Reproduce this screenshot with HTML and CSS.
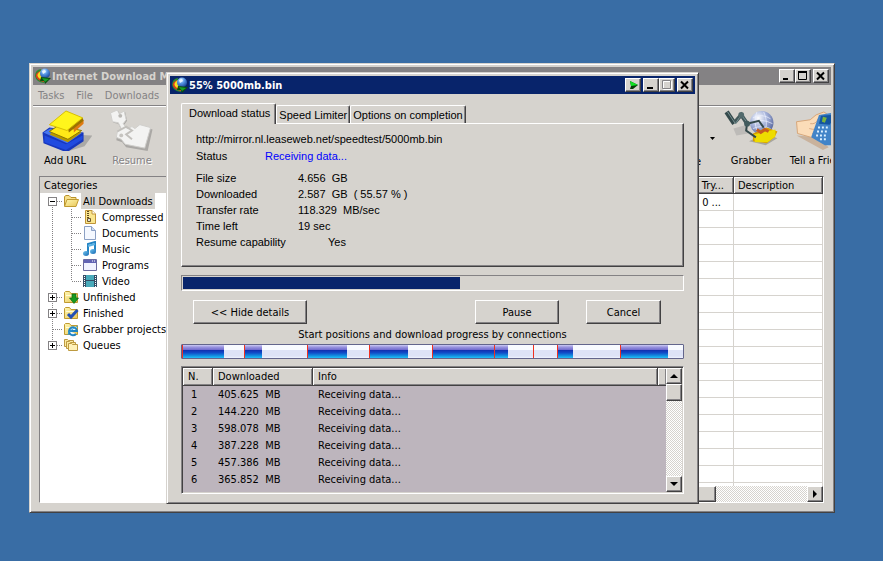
FILE: index.html
```html
<!DOCTYPE html>
<html lang="en">
<head>
<meta charset="utf-8">
<title>Internet Download Manager</title>
<link rel="stylesheet" href="styles.css">
</head>
<body>
<svg class="defs" aria-hidden="true">
  <defs>
    <linearGradient id="yellow" x1="0" y1="0" x2="1" y2="1"><stop offset="0" stop-color="#fff7b0"/><stop offset="1" stop-color="#e8c65a"/></linearGradient>
    <linearGradient id="sky" x1="0" y1="0" x2="1" y2="1"><stop offset="0" stop-color="#6fc4f0"/><stop offset="1" stop-color="#1668b0"/></linearGradient>
    <radialGradient id="ball" cx=".35" cy=".3" r=".8"><stop offset="0" stop-color="#fff"/><stop offset=".45" stop-color="#a9b6dc"/><stop offset="1" stop-color="#4d5b94"/></radialGradient>
    <radialGradient id="globe" cx=".4" cy=".25" r=".8"><stop offset="0" stop-color="#d8ecff"/><stop offset=".4" stop-color="#5a9be8"/><stop offset="1" stop-color="#123a90"/></radialGradient>
    <symbol id="logo" viewBox="0 0 16 16">
      <path d="M6 1Q0 2 0 8Q1 14 9 15L9 10Q4 9 6 1Z" fill="#2a8c30"/>
      <path d="M5 3Q0 5 1 9Q3 13 9 14L9 10Q4 9 5 3Z" fill="#e03c1c"/>
      <path d="M6 3Q1 6 3 9Q5 12 9 12L9 9Q5 8 6 3Z" fill="#f8e020"/>
      <circle cx="10" cy="5.500" r="5" fill="url(#globe)"/>
      <path d="M7 3 10 2 11 4 8 6Z" fill="#e8f4ff"/>
      <path d="M6 9 16 10 10 16 9 13 5 13Z" fill="#0c5010"/>
      <path d="M7 10 14 11 10 14Z" fill="#18a028"/>
    </symbol>
    <symbol id="folder" viewBox="0 0 16 16">
      <path d="M1.500 13.500V3.500L2.500 2.500H6.500L8 4.500H14.500V13.500Z" fill="url(#yellow)" stroke="#c09a30"/>
      <path d="M3 6.500h11" stroke="#fffbd8"/>
    </symbol>
  </defs>
</svg>

<main class="desktop">
  <section class="window main-window" aria-label="Internet Download Manager">
    <header class="titlebar inactive">
      <svg class="logo"><use href="#logo"/></svg>
      <h1>Internet Download Manager</h1>
      <div class="controls">
        <button type="button" aria-label="Minimize"><svg viewBox="0 0 12 10"><path d="M2 8h5" stroke="#000" stroke-width="2"/></svg></button>
        <button type="button" aria-label="Maximize"><svg viewBox="0 0 12 10"><path d="M1.500 1v7.500h8V1M1 1h9" fill="none" stroke="#000"/><path d="M1 1h9" stroke="#000" stroke-width="2"/></svg></button>
        <button type="button" class="close" aria-label="Close"><svg viewBox="0 0 12 10"><path d="M2 1.500 9 8.500M9 1.500 2 8.500" stroke="#000" stroke-width="2"/></svg></button>
      </div>
    </header>
    <nav class="menubar"><button type="button">Tasks</button><button type="button">File</button><button type="button">Downloads</button></nav>
    <div class="toolbar">
      <button type="button" class="tool">
        <svg viewBox="-3 0 54 44">
          <path d="M30 25 52 26 44 37 28 42Z" fill="#aaa9a6"/>
          <path d="M1 23 8 18 43 23 43 32 28 42 22 42 2 34Z" fill="#1737bd"/>
          <path d="M2 23 9 19 42 23 26 34Z" fill="#4776f0"/>
          <path d="M3 26 25 35 42 26 42 30 25 41 3 33Z" fill="#204be0"/>
          <path d="M8 25 17 18 41 23 27 33Z" fill="#b89800"/>
          <path d="M8 22 17 16 41 21 27 30Z" fill="#ffe817" stroke="#8c7600"/>
          <path d="M33 18 43 10 43 14 33 23Z" fill="#e07a12"/>
          <path d="M27 19 42 8 43 11 28 23Z" fill="#9c7200"/>
          <path d="M8 15 25 1 42 8 26 21Z" fill="#fff51c" stroke="#d6bd00"/>
        </svg>
        <span>Add URL</span>
      </button>
      <button type="button" class="tool" disabled>
        <svg viewBox="-3 0 54 44">
          <path d="M3 4 10 1 12 5 17 2 19 11 16 15 20 20 25 18 28 20 33 16 45 20 40 42 18 38 14 33 8 31 9 23 13 20 10 14 5 13Z" fill="#aaa8a5"/>
          <path d="M2 3 9 0 11 4 16 1 18 10 15 14 19 19 24 17 27 19 32 15 43 18 37 39 17 35 13 30 8 28 9 22 13 19 10 13 4 12Z" fill="#f3f3f2" stroke="#d0cfcc"/>
          <path d="M9 22 18 17 24 21 18 25 24 30" fill="none" stroke="#c2c0bc" stroke-width="2"/>
          <circle cx="12" cy="6" r="2" fill="#b9b7b3"/><circle cx="13" cy="26" r="2" fill="#c6c4c0"/>
        </svg>
        <span>Resume</span>
      </button>
      <div class="toolbar-end">
        <button type="button" class="tool queue"><span>Queue</span></button>
        <button type="button" class="drop" aria-label="Queue options"><svg viewBox="0 0 5 3"><path d="M0 0h5L2.500 3Z"/></svg></button>
        <button type="button" class="tool">
          <svg viewBox="0 0 54 44">
            <path d="M9 19 23 15 24 24 12 26Z" fill="#bdbbb8"/><path d="M25 32 42 24 54 29 42 36Z" fill="#a8a69f"/>
            <circle cx="38" cy="13" r="12" fill="url(#ball)"/>
            <path d="M29 8q9-5 18 1M27 13q11-5 22 1M29 19q9-4 18 0M33 2q-4 11 1 21M40 2q5 10 1 22" fill="none" stroke="#eef2ff" stroke-width=".7"/>
            <path d="M29 24 43 18 54 22 51 28 43 34 29 32Z" fill="#d79b00"/><path d="M30 25 42 22 52 20 52 27 44 33 31 33Z" fill="#eedc00"/>
            <path d="M33 20l4 3 4-3 4 2" fill="none" stroke="#c65c20" stroke-width="3"/>
            <path d="M2 2 10 14" stroke="#34494b" stroke-width="5"/><path d="M10 13 17 5 23 14" fill="none" stroke="#42585a" stroke-width="4"/>
            <path d="M23 14 35 11 40 18M23 14 22 21 32 28" fill="none" stroke="#34494b" stroke-width="2"/>
            <path d="M3 2 11 14 17 5 24 14" fill="none" stroke="#789092" stroke-width="1"/>
            <circle cx="17" cy="5" r="3" fill="#526a6c"/><circle cx="23" cy="14" r="3" fill="#425b5d"/>
          </svg>
          <span>Grabber</span>
        </button>
        <button type="button" class="tool tell">
          <svg viewBox="-3 0 54 44">
            <path d="M1 26 22 28 34 38 28 41Z" fill="#c9b29c"/>
            <path d="M1 12 15 10 21 5 29 2 32 4 27 12 29 18 25 28 16 28 2 24Z" fill="#fbdcb8" stroke="#d6a578"/>
            <path d="M15 14q6 1 8-5M14 19q7 2 10-1M17 24l6-1" fill="none" stroke="#d8a982"/>
            <path d="M24 5 36 3 42 8 37 36 30 36 16 28Z" fill="#4284c8"/><path d="M26 6 36 5 39 8 35 15 24 14Z" fill="#1455a0"/><path d="M28 7l4 1-2 5-3-1Z" fill="#7bb43e"/>
            <g stroke="#ddf1ff" stroke-width="2"><path d="M23 18h2m2 0h2m2 0h2M22 22h2m2 0h2m2 0h2M21 26h2m2 0h2m2 0h2M25 30h2m2 0h2"/></g>
          </svg>
          <span>Tell a Friend</span>
        </button>
      </div>
    </div>
    <div class="workspace">
      <aside class="categories">
        <h2>Categories</h2>
        <ul class="tree">
          <li><a href="#" class="selected"><i class="toggle open"></i>
            <svg viewBox="0 0 16 16"><path d="M1.500 13V3.500L3 2.500H6L8 4.500H13V7" fill="#f7df88" stroke="#b8922c"/><path d="M1.500 13.500 4 6.500H15.500L13 13.500Z" fill="url(#yellow)" stroke="#c09a30"/></svg><span>All Downloads</span></a>
            <ul>
              <li><a href="#"><svg viewBox="0 0 16 16"><path d="M3.500 1.500H10L13.500 5V14.500H3.500Z" fill="#fae68e" stroke="#c09438"/><path d="M10 1.500V5h3.500" fill="#fff" stroke="#c09438"/><path d="M6 2v10" stroke="#604820" stroke-width="2" stroke-dasharray="1 1"/><path d="M5.500 9.500h3v3h-3Z" fill="#ddd" stroke="#705828"/></svg><span>Compressed</span></a></li>
              <li><a href="#"><svg viewBox="0 0 16 16"><path d="M2.500 1.500H9.500L13.500 5.500V14.500H2.500Z" fill="#f4f8ff" stroke="#8ba0c4"/><path d="M9.500 1.500V5.500h4" fill="#cddbf2" stroke="#8ba0c4"/></svg><span>Documents</span></a></li>
              <li><a href="#"><svg viewBox="0 0 16 16"><path d="M6 12V3L13 1V10" fill="none" stroke="#2484c4" stroke-width="2"/><path d="M6 5 13 3" stroke="#59b2e4" stroke-width="2"/><ellipse cx="4" cy="12.500" rx="3" ry="2.500" fill="url(#sky)"/><ellipse cx="11" cy="10.500" rx="3" ry="2.500" fill="url(#sky)"/></svg><span>Music</span></a></li>
              <li><a href="#"><svg viewBox="0 0 16 16"><path d="M1.500 2.500h13v11h-13Z" fill="#f0f2ff" stroke="#6c6ca0"/><path d="M2 3h12v3H2Z" fill="#6264b4"/><path d="M10 4h1m1 0h1" stroke="#fff"/></svg><span>Programs</span></a></li>
              <li><a href="#"><svg viewBox="0 0 16 16"><path d="M1 2h14v12H1Z" fill="#354e66"/><path d="M4 2h8v5H4zM4 8h8v6H4z" fill="#48aaba"/><path d="M2.500 3v11M13.500 3v11" stroke="#fff" stroke-dasharray="1 1"/></svg><span>Video</span></a></li>
            </ul>
          </li>
          <li><a href="#"><i class="toggle"></i><svg viewBox="0 0 16 16"><use href="#folder"/><path d="M9 5h4v4h2.500L11 14.500 6.500 9H9Z" fill="#169a20" stroke="#0b6814" stroke-width=".7"/></svg><span>Unfinished</span></a></li>
          <li><a href="#"><i class="toggle"></i><svg viewBox="0 0 16 16"><use href="#folder"/><path d="M5 9 8 12 14.500 5" fill="none" stroke="#2450b4" stroke-width="3"/></svg><span>Finished</span></a></li>
          <li><a href="#"><svg viewBox="0 0 16 16"><use href="#folder"/><path d="M6.500 10H14a4 4 0 1 0-1 3" fill="#e9f7ff" stroke="#2184c4" stroke-width="2"/><path d="M5 14q0-4 10-9" fill="none" stroke="#2f9ad5"/></svg><span>Grabber projects</span></a></li>
          <li><a href="#"><i class="toggle"></i><svg viewBox="0 0 16 16"><path d="M1.500 9.500V2.500h3l1 1h5v6Z" fill="#fbeaa0" stroke="#bd9a40"/><path d="M3.500 11.500V4.500h3l1 1h5v6Z" fill="#fbeaa0" stroke="#bd9a40"/><path d="M5.500 13.500V6.500h3l1 1h5v6Z" fill="#fff2b8" stroke="#bd9a40"/></svg><span>Queues</span></a></li>
        </ul>
      </aside>
      <div class="downloads">
        <div class="downloads-view">
          <table>
            <thead><tr><th></th><th class="try">Last Try...</th><th class="desc">Description</th></tr></thead>
            <tbody>
              <tr><td></td><td class="try">0 ...</td><td></td></tr>
              <tr><td></td><td></td><td></td></tr><tr><td></td><td></td><td></td></tr><tr><td></td><td></td><td></td></tr><tr><td></td><td></td><td></td></tr>
              <tr><td></td><td></td><td></td></tr><tr><td></td><td></td><td></td></tr><tr><td></td><td></td><td></td></tr><tr><td></td><td></td><td></td></tr>
              <tr><td></td><td></td><td></td></tr><tr><td></td><td></td><td></td></tr><tr><td></td><td></td><td></td></tr><tr><td></td><td></td><td></td></tr>
              <tr><td></td><td></td><td></td></tr><tr><td></td><td></td><td></td></tr><tr><td></td><td></td><td></td></tr><tr><td></td><td></td><td></td></tr><tr><td></td><td></td><td></td></tr>
            </tbody>
          </table>
        </div>
        <div class="scroll horizontal"><span class="thumb"></span><button type="button" aria-label="Scroll right"><svg viewBox="0 0 8 8"><path d="M2 0v8l4-4Z"/></svg></button></div>
      </div>
    </div>
  </section>

  <section class="window dialog" role="dialog" aria-label="55% 5000mb.bin">
    <header class="titlebar">
      <svg class="logo"><use href="#logo"/></svg>
      <h1>55% 5000mb.bin</h1>
      <div class="controls">
        <button type="button" class="tray" aria-label="Send to tray"><svg viewBox="0 0 12 10"><path d="M3 1 11 5 6 9 3 9 4 6Z" fill="#063b08"/><path d="M3 1 11 5 4 6Z" fill="#10e424"/></svg></button>
        <button type="button" aria-label="Minimize"><svg viewBox="0 0 12 10"><path d="M2 8h6" stroke="#000" stroke-width="2"/></svg></button>
        <button type="button" aria-label="Maximize" disabled><svg viewBox="0 0 12 10"><path d="M2.500 1.500h8v8h-8Z" fill="none" stroke="#fff"/><path d="M1.500 .5h8v8h-8Z" fill="none" stroke="#848284"/></svg></button>
        <button type="button" class="close" aria-label="Close"><svg viewBox="0 0 12 10"><path d="M2 1.500 9 8.500M9 1.500 2 8.500" stroke="#000" stroke-width="2"/></svg></button>
      </div>
    </header>
    <div class="dialog-body">
      <div class="tabs" role="tablist">
        <button type="button" role="tab" class="tab active" aria-selected="true">Download status</button>
        <button type="button" role="tab" class="tab">Speed Limiter</button>
        <button type="button" role="tab" class="tab">Options on completion</button>
      </div>
      <div class="panel" role="tabpanel">
        <p>http://mirror.nl.leaseweb.net/speedtest/5000mb.bin</p>
        <dl class="status"><dt>Status</dt><dd>Receiving data...</dd></dl>
        <dl class="facts">
          <dt>File size</dt><dd>4.656&nbsp; GB</dd>
          <dt>Downloaded</dt><dd>2.587&nbsp; GB&nbsp; ( 55.57 % )</dd>
          <dt>Transfer rate</dt><dd>118.329&nbsp; MB/sec</dd>
          <dt>Time left</dt><dd>19 sec</dd>
          <dt>Resume capability</dt><dd class="resume">Yes</dd>
        </dl>
      </div>
      <div class="progress" role="progressbar" aria-label="Download progress" aria-valuenow="55"><div class="fill" style="width: 55.57%"></div></div>
      <div class="actions">
        <button type="button" class="button details">&lt;&lt; Hide details</button>
        <button type="button" class="button pause">Pause</button>
        <button type="button" class="button cancel">Cancel</button>
      </div>
      <p class="caption">Start positions and download progress by connections</p>
      <div class="segments">
        <span class="done start" style="flex-grow: 42"></span><span style="flex-grow: 20"></span>
        <span class="done start" style="flex-grow: 17"></span><span style="flex-grow: 46"></span>
        <span class="done start" style="flex-grow: 40"></span><span style="flex-grow: 22"></span>
        <span class="done start" style="flex-grow: 39"></span><span style="flex-grow: 24"></span>
        <span class="done start" style="flex-grow: 63"></span><span class="done start" style="flex-grow: 13"></span><span style="flex-grow: 25"></span>
        <span class="start" style="flex-grow: 24"></span>
        <span class="done start" style="flex-grow: 15"></span><span style="flex-grow: 48"></span>
        <span class="done start" style="flex-grow: 48"></span><span style="flex-grow: 15"></span>
      </div>
      <div class="connections">
        <div class="connections-view">
          <table>
            <thead><tr><th class="num">N.</th><th class="amount">Downloaded</th><th>Info</th><th class="rest"></th></tr></thead>
            <tbody>
              <tr><td>1</td><td>405.625&nbsp; MB</td><td>Receiving data...</td><td></td></tr>
              <tr><td>2</td><td>144.220&nbsp; MB</td><td>Receiving data...</td><td></td></tr>
              <tr><td>3</td><td>598.078&nbsp; MB</td><td>Receiving data...</td><td></td></tr>
              <tr><td>4</td><td>387.228&nbsp; MB</td><td>Receiving data...</td><td></td></tr>
              <tr><td>5</td><td>457.386&nbsp; MB</td><td>Receiving data...</td><td></td></tr>
              <tr><td>6</td><td>365.852&nbsp; MB</td><td>Receiving data...</td><td></td></tr>
            </tbody>
          </table>
        </div>
        <div class="scroll vertical">
          <button type="button" aria-label="Scroll up"><svg viewBox="0 0 8 8"><path d="M0 6h8L4 2Z"/></svg></button>
          <span class="thumb"></span>
          <button type="button" class="down" aria-label="Scroll down"><svg viewBox="0 0 8 8"><path d="M0 2h8L4 6Z"/></svg></button>
        </div>
      </div>
    </div>
  </section>
</main>
</body>
</html>
```
FILE: styles.css
```css
:root {
  --face: #d6d3ce;
  --shade: #848284;
  --dark: #424142;
  --navy: #08246b;
}

* { box-sizing: border-box; }

body, h1, h2, p, ul, dl, dd { margin: 0; padding: 0; }

body, button {
  font-family: "DejaVu Sans Condensed", Tahoma, "Noto Sans", sans-serif;
  font-size: 11px;
  line-height: 16px;
  color: #000;
}

body { background: #396da5; }
.defs { position: absolute; width: 0; height: 0; }
.desktop { position: relative; min-height: 100vh; overflow: hidden; }
svg { display: block; flex: none; }
ul { list-style: none; }
table { width: 100%; border-collapse: separate; border-spacing: 0; table-layout: fixed; }
th, td { padding: 0; text-align: left; font-weight: normal; white-space: nowrap; overflow: hidden; }
td { vertical-align: bottom; }

button { margin: 0; padding: 0; border: 0; background: var(--face); white-space: nowrap; }

.window {
  position: absolute;
  padding: 3px;
  border: 1px solid;
  border-color: var(--face) var(--dark) var(--dark) var(--face);
  background: var(--face);
  box-shadow: inset 1px 1px #fff, inset -1px -1px var(--shade);
}
.main-window { left: 29px; right: 48px; top: 63px; }
.dialog { left: 166px; right: 184px; top: 72px; }

.titlebar {
  display: flex;
  align-items: center;
  height: 18px;
  padding: 0 2px;
  background: var(--navy);
  color: #fff;
}
.titlebar h1 {
  flex: 1;
  padding: 1px 0 0 1px;
  font-size: 11px;
  font-weight: bold;
  white-space: nowrap;
}
.titlebar.inactive { background: var(--shade); color: var(--face); }
.logo { width: 16px; height: 16px; }

.controls { display: flex; }
.controls button, .scroll button, .thumb, .button {
  border: 1px solid;
  border-color: #fff var(--dark) var(--dark) #fff;
  box-shadow: inset -1px -1px var(--shade);
  background: var(--face);
}
.controls button { width: 16px; height: 14px; padding: 1px; }
.controls svg { width: 12px; height: 10px; }
.controls .close, .controls .tray + button { margin-left: 2px; }

.menubar { display: flex; gap: 12px; height: 21px; padding: 3px 5px 1px; border-bottom: 1px solid var(--shade); box-shadow: 0 1px #fff; }
.menubar button { color: var(--shade); }

.toolbar { display: flex; height: 70px; padding-top: 4px; }
.tool { display: flex; flex-direction: column; align-items: center; width: 64px; height: 60px; flex: none; }
.tool svg { width: 54px; height: 43px; }
.tool:disabled { color: var(--shade); text-shadow: 1px 1px #fff; margin-left: 3px; }
.toolbar-end { display: flex; width: 168px; margin-left: auto; overflow: hidden; }
.queue { width: 38px; justify-content: flex-end; align-items: flex-end; }
.drop { width: 16px; height: 56px; margin-right: 4px; }
.drop svg { width: 5px; height: 3px; margin-left: 9px; }
.tell { width: 72px; }

.workspace { display: flex; gap: 4px; padding: 0 7px 6px 6px; }
.categories, .downloads, .connections { border: 1px solid; border-color: var(--shade) #fff #fff var(--shade); background: #fff; }
.categories { width: 144px; }
.categories h2 { height: 16px; padding: 1px 0 0 4px; background: var(--face); font-size: 11px; font-weight: normal; }

.tree { padding-left: 8px; }
.tree a { display: flex; align-items: center; height: 16px; padding-left: 15px; color: #000; text-decoration: none; white-space: nowrap; position: relative; }
.tree a svg { width: 16px; height: 16px; }
.tree a span { margin-left: 2px; padding: 2px 2px 0; line-height: 14px; }
.tree a.selected span { background: var(--face); }
.tree > li { position: relative; background: repeating-linear-gradient(var(--shade) 0 1px, transparent 1px 2px) 4px 0 / 1px 100% no-repeat; }
.tree > li:first-child { background-position: 4px 8px; }
.tree > li:last-child { background-size: 1px 8px; }
.tree > li > a, .tree ul a { background: repeating-linear-gradient(90deg, var(--shade) 0 1px, transparent 1px 2px) 5px 8px / 10px 1px no-repeat; }
.tree ul { margin-left: 23px; background: repeating-linear-gradient(var(--shade) 0 1px, transparent 1px 2px) 0 0 / 1px 72px no-repeat; }
.tree ul a { padding-left: 11px; background-position: 1px 8px; }
.toggle { position: absolute; left: 0; top: 4px; width: 9px; height: 9px; border: 1px solid var(--shade); background: linear-gradient(#000, #000) 1px 3px / 5px 1px no-repeat, linear-gradient(#000, #000) 3px 1px / 1px 5px no-repeat, #fff; }
.toggle.open { background: linear-gradient(#000, #000) 1px 3px / 5px 1px no-repeat, #fff; }

.downloads { flex: 1; min-width: 0; border-top-color: var(--dark); }
.downloads-view { height: 309px; overflow: hidden; }
th {
  height: 17px;
  background: var(--face);
  border-right: 1px solid var(--dark);
  border-bottom: 1px solid var(--dark);
  box-shadow: inset 1px 1px #fff, inset -1px -1px var(--shade);
}
.downloads th, .downloads td { padding-top: 2px; line-height: 14px; }
.downloads td { height: 17px; border-right: 1px solid var(--face); border-bottom: 1px solid var(--face); }
.downloads th.try { width: 60px; padding-right: 9px; text-align: right; }
.downloads td.try { padding-right: 12px; text-align: right; }
.downloads .desc { width: 89px; padding-left: 4px; }

.scroll { display: flex; background: repeating-conic-gradient(#fff 0 25%, var(--face) 0 50%) 0 0 / 2px 2px; }
.scroll button { display: flex; align-items: center; justify-content: center; width: 16px; height: 16px; }
.scroll svg { width: 8px; height: 8px; }
.horizontal .thumb { width: calc(100% - 107px); height: 16px; }
.horizontal button { margin-left: auto; }
.vertical { flex-direction: column; width: 16px; }
.vertical .thumb { width: 16px; height: 17px; }
.vertical .down { margin-top: auto; }

.dialog-body { padding: 9px 11px 6px; }
.tabs { display: flex; align-items: flex-end; height: 20px; }
.tab, .panel { font-family: "Liberation Sans", Arial, sans-serif; }
.tab {
  height: 18px;
  padding: 1px 2px 0;
  border: 1px solid;
  border-color: #fff var(--dark) transparent #fff;
  border-bottom: 0;
  border-radius: 2px 2px 0 0;
  box-shadow: inset -1px 0 var(--shade);
}
.tab.active { position: relative; height: 21px; margin-bottom: -1px; padding: 0 5px 2px 7px; }
.panel {
  height: 144px;
  padding: 7px 14px;
  border: 1px solid;
  border-color: #fff var(--dark) var(--dark) #fff;
  box-shadow: inset -1px -1px var(--shade);
}
.status { display: grid; grid-template-columns: 69px 1fr; margin: 1px 0 6px; }
.status dd { color: #00f; }
.facts { display: grid; grid-template-columns: 102px 1fr; }
.facts .resume { padding-left: 30px; }

.progress { height: 16px; margin-top: 8px; padding: 1px; border: 1px solid; border-color: var(--shade) #fff #fff var(--shade); }
.fill { height: 100%; background: var(--navy); }
.actions { display: flex; padding: 9px 23px 0 12px; }
.button { height: 24px; padding-top: 1px; }
.details { width: 114px; margin-right: auto; }
.pause { width: 84px; margin-right: 27px; }
.cancel { width: 75px; }
.caption { height: 20px; padding-top: 3px; text-align: center; }

.segments { display: flex; height: 15px; border: 1px solid #63658c; border-radius: 1px; background: linear-gradient(#f8faff 0 40%, #dee3f7 40% 85%, #eff3ff); }
.segments span { flex-basis: 0; }
.segments .done { background: linear-gradient(#ceccf5 0, #9c96e0 15%, #6e68ce 38%, #1030b0 40%, #104cc8 60%, #1088de 80%, #20c0f7); }
.segments .start { border-left: 1px solid #f03020; }

.connections { display: flex; height: 128px; margin-top: 7px; padding: 1px 1px 1px 0; background: #bdb5bd; box-shadow: inset 1px 1px var(--dark), inset -1px -1px var(--face); }
.connections-view { flex: 1; min-width: 0; overflow: hidden; padding-left: 1px; }
.connections .num { width: 30px; }
.connections .amount { width: 100px; }
.connections .rest { width: 8px; padding: 0; border-right: 0; }
.connections th, .connections td { padding-left: 5px; }
.connections th { padding-top: 1px; }
.connections td { height: 17px; }
.connections td:first-child { padding-left: 8px; }
```
